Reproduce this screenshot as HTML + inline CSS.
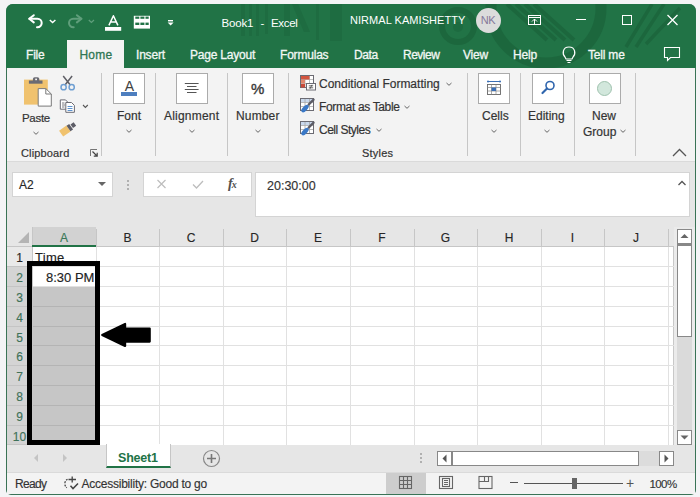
<!DOCTYPE html>
<html><head><meta charset="utf-8">
<style>
*{box-sizing:border-box}
body{margin:0;width:700px;height:497px;background:#f4f4f6;position:relative;overflow:hidden;font-family:"Liberation Sans",sans-serif;color:#262626}
.a{position:absolute}
.t{position:absolute;white-space:nowrap;line-height:1}
.tab{color:#f2f7f4;font-size:12px;top:48.5px;-webkit-text-stroke:0.3px #f2f7f4;letter-spacing:-0.2px}
.rl{font-size:12px;color:#333;-webkit-text-stroke:0.2px #333}
.box{position:absolute;background:#fff;border:1px solid #ababab}
.sep{position:absolute;width:1px;background:#c6c6c6;top:73px;height:83px}
.chev{position:absolute;width:5px;height:5px;border-right:1px solid #444;border-bottom:1px solid #444;transform:rotate(45deg)}
.ch{position:absolute;font-size:12px;color:#262626;top:230.5px;text-align:center;width:64px;-webkit-text-stroke:0.15px currentColor}
.rn{position:absolute;font-size:12px;color:#262626;left:7px;width:25px;text-align:center;-webkit-text-stroke:0.15px currentColor}
</style></head>
<body>
<!-- window -->
<div class="a" style="left:6px;top:4px;width:690px;height:491px;border-radius:7px 7px 5px 5px;background:#3a7356"></div>
<div class="a" style="left:6px;top:4px;width:690px;height:64px;border-radius:7px 7px 0 0;background:#217346"></div>
<!-- title bar pattern -->
<svg class="a" style="left:6px;top:4px" width="690" height="64" viewBox="6 4 690 64">
  <g fill="none" stroke="#1b633b" stroke-opacity="0.75">
    <circle cx="458" cy="26" r="16" stroke-width="6"/>
    <circle cx="546" cy="8" r="55" stroke-width="11"/>
    <path d="M507 4 L547 40 M516 4 L556 40 M525 4 L565 40 M534 4 L574 40" stroke-width="4"/>
    <path d="M626 47 L652 4 M636 47 L664 4 M646 44 L680 8" stroke-width="3.5"/>
  </g>
  <circle cx="458" cy="27" r="5" fill="#1c673d" fill-opacity="0.65"/>
  <g fill="#1c673d" fill-opacity="0.6">
    <rect x="241" y="4" width="4" height="32"/>
    <rect x="249" y="4" width="3" height="32"/>
    <rect x="256" y="4" width="3" height="32"/>
    <rect x="265" y="4" width="3" height="30"/>
    <rect x="284" y="4" width="6" height="32"/>
    <path d="M292 4 h6 l12 28 h-6 z"/>
    <rect x="316" y="4" width="3" height="36"/>
    <rect x="330" y="4" width="12" height="37"/>
  </g>
</svg>

<!-- quick access toolbar -->
<svg class="a" style="left:26px;top:12px" width="160" height="22" viewBox="0 0 160 22">
  <g fill="none" stroke="#fff" stroke-width="2" stroke-linecap="round" stroke-linejoin="round">
    <path d="M3.5 6.8 H11.5 A4.2 4.2 0 0 1 11.5 15.2 H11"/>
    <path d="M7.8 3.2 L3.2 6.8 L7.8 10.4"/>
  </g>
  <path d="M23.8 8 L26.6 10.6 L29.4 8" fill="none" stroke="#fff" stroke-width="1.4"/>
  <g fill="none" stroke="#5f9e7b" stroke-width="2" stroke-linecap="round" stroke-linejoin="round">
    <path d="M55.2 6.8 H47.2 A4.2 4.2 0 0 0 47.2 15.2 H47.7"/>
    <path d="M50.9 3.2 L55.5 6.8 L50.9 10.4"/>
  </g>
  <path d="M62.8 8 L65.4 10.4 L68 8" fill="none" stroke="#5f9e7b" stroke-width="1.3"/>
  <path d="M82.9 13.4 L87.4 3.8 L91.9 13.4 M84.5 10 H90.3" fill="none" stroke="#fff" stroke-width="1.5" stroke-linejoin="round"/>
  <rect x="79" y="15" width="16.2" height="3.8" fill="#fff"/>
  <rect x="107.8" y="3.8" width="16.2" height="12.8" fill="#fff"/>
  <g fill="#217346">
    <rect x="109.3" y="4.6" width="4" height="2.2"/><rect x="114.4" y="4.6" width="4" height="2.2"/><rect x="119.5" y="4.6" width="3.2" height="2.2"/>
    <rect x="109.3" y="10.6" width="4" height="2.4"/><rect x="114.4" y="10.6" width="4" height="2.4"/><rect x="119.5" y="10.6" width="3.2" height="2.4"/>
  </g>
  <g fill="#fff">
    <rect x="142" y="8" width="5" height="1.4"/>
    <path d="M141.6 10.4 h6 l-3 3.2 z"/>
  </g>
</svg>

<div class="t" style="left:221.5px;top:18px;font-size:11.5px;color:#fff;letter-spacing:-0.15px">Book1</div>
<div class="t" style="left:260.5px;top:18px;font-size:11.5px;color:#fff">-</div>
<div class="t" style="left:271px;top:18px;font-size:11.5px;color:#fff;letter-spacing:-0.3px">Excel</div>
<div class="t" style="left:350px;top:14.5px;font-size:11px;color:#fff;letter-spacing:0.05px">NIRMAL KAMISHETTY</div>
<div class="a" style="left:476px;top:8px;width:25px;height:25px;border-radius:50%;background:#dcdcdc"></div>
<div class="t" style="left:479.5px;top:15px;font-size:11px;color:#85789a;width:17px;text-align:center;letter-spacing:-0.3px">NK</div>

<!-- window controls -->
<svg class="a" style="left:520px;top:8px" width="170" height="24" viewBox="0 0 170 24">
  <g fill="none" stroke="#fff" stroke-width="1">
    <rect x="8.5" y="7.5" width="12" height="9"/>
    <line x1="8.5" y1="9.5" x2="20.5" y2="9.5"/>
    <path d="M12 13.5 l2.5 -2.5 l2.5 2.5 M14.5 11 v5"/>
    <line x1="56" y1="11.5" x2="66" y2="11.5"/>
    <rect x="102.5" y="7.5" width="9" height="9"/>
    <path d="M147.5 7 l10 10 M157.5 7 l-10 10" stroke-width="1.3"/>
  </g>
</svg>

<!-- tabs -->
<div class="a" style="left:67px;top:40px;width:57px;height:28px;background:#f3f3f3"></div>
<div class="t tab" style="left:26px">File</div>
<div class="t tab" style="left:79.5px;color:#2f7754;letter-spacing:0.2px;-webkit-text-stroke:0.3px #2f7754">Home</div>
<div class="t tab" style="left:136px">Insert</div>
<div class="t tab" style="left:190px">Page Layout</div>
<div class="t tab" style="left:280px">Formulas</div>
<div class="t tab" style="left:354px;letter-spacing:-0.4px">Data</div>
<div class="t tab" style="left:403px;letter-spacing:-0.5px">Review</div>
<div class="t tab" style="left:463px">View</div>
<div class="t tab" style="left:513px">Help</div>
<svg class="a" style="left:560px;top:44px" width="18" height="20" viewBox="0 0 18 20">
  <path d="M5 13 C2 10 2.5 3 9 3 C15.5 3 16 10 13 13 L12 15 H6 Z" fill="none" stroke="#fff" stroke-width="1.2"/>
  <path d="M6.5 16.5 h5 M7.5 18.5 h3" stroke="#fff" stroke-width="1"/>
</svg>
<div class="t tab" style="left:588px">Tell me</div>
<svg class="a" style="left:662px;top:44px" width="20" height="20" viewBox="0 0 20 20">
  <path d="M2.5 3.5 h15 v10 h-9 l-3 3 v-3 h-3 z" fill="none" stroke="#fff" stroke-width="1.1"/>
</svg>

<!-- ribbon -->
<div class="a" style="left:7px;top:68px;width:688px;height:94px;background:#f3f3f3;border-bottom:1px solid #dadada"></div>

<!-- clipboard group -->
<svg class="a" style="left:20px;top:74px" width="80" height="64" viewBox="0 0 80 64">
  <rect x="4" y="5.6" width="23.8" height="25" fill="#f0c26e"/>
  <path d="M8.9 6.5 H22.5 V9.7 H8.9 Z" fill="#6b6b73"/>
  <path d="M12.9 6.9 V5 A1.8 1.8 0 0 1 14.7 3.2 H17.5 A1.8 1.8 0 0 1 19.3 5 V6.9 Z" fill="#6b6b73"/>
  <rect x="15.2" y="4.6" width="1.8" height="1.6" fill="#f3f3f3"/>
  <path d="M18.2 14.6 H25.8 L31.3 20 V32.1 H18.2 Z" fill="#fff" stroke="#7a7a7a" stroke-width="1"/>
  <path d="M25.8 14.6 V20 H31.3" fill="none" stroke="#7a7a7a" stroke-width="1"/>
  <!-- scissors -->
  <path d="M43.2 2 L50.3 11 M52.1 2 L45 11" stroke="#5f5f66" stroke-width="1.5"/>
  <circle cx="43.6" cy="13.2" r="2.6" fill="none" stroke="#6f9fd2" stroke-width="1.5"/>
  <circle cx="51.7" cy="13.2" r="2.6" fill="none" stroke="#6f9fd2" stroke-width="1.5"/>
  <!-- copy -->
  <path d="M40.3 25.9 H45.5 L47.8 28.2 V35.2 H40.3 Z" fill="#fff" stroke="#6b6b73" stroke-width="1"/>
  <path d="M42 29 H44.5 M42 31 H45 M42 33 H44.5" stroke="#6b6b73" stroke-width="0.9"/>
  <path d="M45.8 28.5 H51.5 L54.4 31.4 V38.3 H45.8 Z" fill="#fff" stroke="#6b6b73" stroke-width="1"/>
  <path d="M47.6 32.5 H52.5 M47.6 34.5 H52.5 M47.6 36.5 H52.5" stroke="#4a86c8" stroke-width="0.9"/>
  <path d="M63 31 L65.4 33.4 L67.8 31" fill="none" stroke="#555" stroke-width="1.1"/>
  <!-- format painter -->
  <g transform="translate(48.5,54.5) rotate(-35)">
    <path d="M-9 -3.6 H0 V3.6 H-9 Z" fill="#f0c26e"/>
    <rect x="0" y="-3.4" width="3.2" height="6.8" fill="#5c5c66"/>
    <rect x="4" y="-2.2" width="3.8" height="4.4" fill="#5c5c66"/>
  </g>
</svg>
<svg class="a" style="left:32px;top:130px" width="8" height="6" viewBox="0 0 8 6"><path d="M1.5 2 L4 4.3 L6.5 2" fill="none" stroke="#666" stroke-width="1"/></svg>
<div class="t rl" style="left:22px;top:112.5px;font-size:11.5px;letter-spacing:-0.3px">Paste</div>
<div class="t rl" style="left:21px;top:147.5px;font-size:11px;letter-spacing:0.15px">Clipboard</div>
<svg class="a" style="left:89px;top:148px" width="10" height="10" viewBox="0 0 10 10">
  <path d="M1.5 8 V1.5 H8" fill="none" stroke="#666" stroke-width="0.9"/>
  <path d="M3.5 3.5 L8 8 M8.2 4.8 V8.2 H4.8" fill="none" stroke="#444" stroke-width="1.2"/>
</svg>
<div class="sep" style="left:101px"></div>

<!-- Font group -->
<div class="box" style="left:113px;top:73px;width:32px;height:31px"></div>
<div class="t" style="left:121px;top:79px;font-size:14px;color:#404040;width:17px;text-align:center">A</div>
<div class="a" style="left:121px;top:92px;width:16px;height:4px;background:#4e7fbf"></div>
<div class="t rl" style="left:117px;top:110px">Font</div>
<svg class="a" style="left:125px;top:128px" width="8" height="6" viewBox="0 0 8 6"><path d="M1.5 2 L4 4.3 L6.5 2" fill="none" stroke="#666" stroke-width="1"/></svg>
<div class="sep" style="left:155px"></div>

<!-- Alignment -->
<div class="box" style="left:176px;top:73px;width:32px;height:31px"></div>
<svg class="a" style="left:176px;top:73px" width="32" height="31" viewBox="0 0 32 31">
  <path d="M8.8 10.5 h13.8 M11 13.5 h9.5 M8.8 16.5 h13.8 M11 19.5 h9.5" stroke="#555" stroke-width="1"/>
</svg>
<div class="t rl" style="left:164px;top:110px;letter-spacing:0.2px">Alignment</div>
<svg class="a" style="left:188px;top:128px" width="8" height="6" viewBox="0 0 8 6"><path d="M1.5 2 L4 4.3 L6.5 2" fill="none" stroke="#666" stroke-width="1"/></svg>
<div class="sep" style="left:227px"></div>

<!-- Number -->
<div class="box" style="left:242px;top:73px;width:32px;height:31px"></div>
<div class="t" style="left:251px;top:81px;font-size:15px;color:#3a3a3a;-webkit-text-stroke:0.4px #3a3a3a">%</div>
<div class="t rl" style="left:236px;top:110px;letter-spacing:0.15px">Number</div>
<svg class="a" style="left:254px;top:128px" width="8" height="6" viewBox="0 0 8 6"><path d="M1.5 2 L4 4.3 L6.5 2" fill="none" stroke="#666" stroke-width="1"/></svg>
<div class="sep" style="left:288px"></div>

<!-- Styles -->
<svg class="a" style="left:296px;top:72px" width="30" height="70" viewBox="296 72 30 70">
  <rect x="300.5" y="75.5" width="13" height="12" fill="#fff" stroke="#6b6b73"/>
  <path d="M305 76 V87 M309.5 76 V87 M301 79.5 H313 M301 83.5 H313" stroke="#b0b0b0" stroke-width="0.8"/>
  <rect x="301" y="76" width="8.5" height="3.5" fill="#d2553f"/>
  <rect x="301" y="80" width="4" height="3.5" fill="#e0866d"/>
  <rect x="301" y="84" width="4" height="3.5" fill="#c84a3a"/>
  <rect x="306.5" y="83.5" width="9" height="6.5" fill="#fff" stroke="#6b6b73"/>
  <path d="M308.8 85.8 H313.2 M308.8 87.8 H313.2 M312 84.8 L310 88.8" stroke="#444" stroke-width="0.8"/>
  <g transform="translate(0,0)">
  <rect x="300.5" y="98.5" width="13" height="12" fill="#fff" stroke="#6b6b73"/>
  <rect x="301" y="99" width="12" height="3.2" fill="#c9d8ec"/>
  <path d="M305 99 V110 M309.5 99 V110 M301 102.5 H313 M301 106.5 H313" stroke="#a8a8a8" stroke-width="0.8"/>
  <path d="M313.6 99.6 L308.6 104.6" stroke="#5c5c66" stroke-width="2.2" stroke-linecap="round"/>
  <ellipse cx="305" cy="108.6" rx="4.6" ry="2.3" transform="rotate(-45 305 108.6)" fill="#3a78c6"/>
  </g>
  <g transform="translate(0,23)">
  <rect x="300.5" y="98.5" width="13" height="12" fill="#fff" stroke="#6b6b73"/>
  <rect x="301" y="99" width="12" height="3.2" fill="#c9d8ec"/>
  <path d="M305 99 V110 M309.5 99 V110 M301 102.5 H313 M301 106.5 H313" stroke="#a8a8a8" stroke-width="0.8"/>
  <path d="M313.6 99.6 L308.6 104.6" stroke="#5c5c66" stroke-width="2.2" stroke-linecap="round"/>
  <ellipse cx="305" cy="108.6" rx="4.6" ry="2.3" transform="rotate(-45 305 108.6)" fill="#3a78c6"/>
  </g>
</svg>
<div class="t rl" style="left:319px;top:78px">Conditional Formatting</div>
<svg class="a" style="left:445px;top:81px" width="8" height="6" viewBox="0 0 8 6"><path d="M1.5 2 L4 4.3 L6.5 2" fill="none" stroke="#666" stroke-width="1"/></svg>
<div class="t rl" style="left:319px;top:101px;letter-spacing:-0.35px">Format as Table</div>
<svg class="a" style="left:403px;top:104px" width="8" height="6" viewBox="0 0 8 6"><path d="M1.5 2 L4 4.3 L6.5 2" fill="none" stroke="#666" stroke-width="1"/></svg>
<div class="t rl" style="left:319px;top:124px;letter-spacing:-0.5px">Cell Styles</div>
<svg class="a" style="left:375px;top:127px" width="8" height="6" viewBox="0 0 8 6"><path d="M1.5 2 L4 4.3 L6.5 2" fill="none" stroke="#666" stroke-width="1"/></svg>
<div class="t rl" style="left:362px;top:147.5px;font-size:11px;letter-spacing:0.2px">Styles</div>
<div class="sep" style="left:467px"></div>

<!-- Cells -->
<div class="box" style="left:478px;top:73px;width:32px;height:31px"></div>
<svg class="a" style="left:478px;top:73px" width="32" height="31" viewBox="0 0 32 31">
  <rect x="9.5" y="11.5" width="13" height="10" fill="#fff" stroke="#666" stroke-width="0.9"/>
  <path d="M9.5 14.5 h13 M9.5 18 h13 M13.5 11.5 v10 M18 11.5 v10" stroke="#888" stroke-width="0.7"/>
  <rect x="13.5" y="14.5" width="4.5" height="3.5" fill="#3b6fb6"/>
  <path d="M9.5 8.5 h13" stroke="#3b6fb6" stroke-width="1"/>
  <circle cx="10" cy="8.5" r="1" fill="#3b6fb6"/><circle cx="22" cy="8.5" r="1" fill="#3b6fb6"/>
</svg>
<div class="t rl" style="left:482px;top:110px">Cells</div>
<svg class="a" style="left:490px;top:128px" width="8" height="6" viewBox="0 0 8 6"><path d="M1.5 2 L4 4.3 L6.5 2" fill="none" stroke="#666" stroke-width="1"/></svg>
<div class="sep" style="left:520px"></div>

<!-- Editing -->
<div class="box" style="left:532px;top:73px;width:32px;height:31px"></div>
<svg class="a" style="left:532px;top:73px" width="32" height="31" viewBox="0 0 32 31">
  <circle cx="18" cy="12.5" r="4" fill="none" stroke="#2f65ad" stroke-width="1.6"/>
  <path d="M15 15.5 L10.5 20" stroke="#2f65ad" stroke-width="2.2" stroke-linecap="round"/>
</svg>
<div class="t rl" style="left:528px;top:110px">Editing</div>
<svg class="a" style="left:543px;top:128px" width="8" height="6" viewBox="0 0 8 6"><path d="M1.5 2 L4 4.3 L6.5 2" fill="none" stroke="#666" stroke-width="1"/></svg>
<div class="sep" style="left:574px"></div>

<!-- New Group -->
<div class="box" style="left:589px;top:73px;width:32px;height:31px"></div>
<div class="a" style="left:597px;top:81px;width:15px;height:15px;border-radius:50%;background:#d2e7dc;border:1px solid #9fc2ae"></div>
<div class="t rl" style="left:592px;top:110px">New</div>
<div class="t rl" style="left:583px;top:126px">Group</div>
<svg class="a" style="left:619px;top:128px" width="8" height="6" viewBox="0 0 8 6"><path d="M1.5 2 L4 4.3 L6.5 2" fill="none" stroke="#666" stroke-width="1"/></svg>
<div class="sep" style="left:635px"></div>

<svg class="a" style="left:670px;top:145px" width="20" height="14" viewBox="0 0 20 14">
  <path d="M3 11 L9.5 4.5 L16 11" fill="none" stroke="#555" stroke-width="1.3"/>
</svg>

<!-- formula band -->
<div class="a" style="left:7px;top:162px;width:688px;height:65px;background:#e6e6e6"></div>
<div class="a" style="left:12px;top:172px;width:101px;height:25px;background:#fff;border:1px solid #d4d4d4"></div>
<div class="t" style="left:19px;top:179px;font-size:12px;color:#262626;-webkit-text-stroke:0.15px currentColor">A2</div>
<svg class="a" style="left:97px;top:180px" width="10" height="8" viewBox="0 0 10 8"><path d="M1 2 h8 l-4 4 z" fill="#666"/></svg>
<div class="a" style="left:127px;top:180px;width:2px;height:2px;background:#b0b0b0"></div>
<div class="a" style="left:127px;top:184px;width:2px;height:2px;background:#b0b0b0"></div>
<div class="a" style="left:127px;top:188px;width:2px;height:2px;background:#b0b0b0"></div>
<div class="a" style="left:143px;top:172px;width:109px;height:25px;background:#fff;border:1px solid #d4d4d4"></div>
<svg class="a" style="left:143px;top:172px" width="109" height="25" viewBox="0 0 109 25">
  <path d="M14.5 8 l8 8 M22.5 8 l-8 8" stroke="#bdbdbd" stroke-width="1.2"/>
  <path d="M50 12.5 l3.5 3.5 l6.5 -7" fill="none" stroke="#bdbdbd" stroke-width="1.3"/>
</svg>
<div class="t" style="left:228px;top:177px;font-size:14px;font-family:'Liberation Serif',serif;font-style:italic;font-weight:bold;color:#505050">f<span style="font-size:10px;margin-left:-1px">x</span></div>
<div class="a" style="left:255px;top:172px;width:435px;height:45px;background:#fff;border:1px solid #d4d4d4"></div>
<div class="t" style="left:267px;top:179.5px;font-size:12.5px;color:#333;-webkit-text-stroke:0.15px currentColor">20:30:00</div>
<svg class="a" style="left:677px;top:179px" width="10" height="8" viewBox="0 0 10 8"><path d="M1.5 6 L5 2.5 L8.5 6" fill="none" stroke="#555" stroke-width="1.3"/></svg>

<!-- column headers -->
<div class="a" style="left:7px;top:227px;width:667px;height:20px;background:#e6e6e6"></div>
<svg class="a" style="left:16px;top:231px" width="14" height="13" viewBox="0 0 14 13"><path d="M13 1 V12 H2 Z" fill="#b4b4b4"/></svg>
<div class="a" style="left:32px;top:227px;width:64px;height:20px;background:#d2d2d2"></div>
<div class="ch" style="left:32px;width:64px;color:#3a7858">A</div>
<div class="ch" style="left:96px;width:63px;color:#262626">B</div>
<div class="ch" style="left:159px;width:64px;color:#262626">C</div>
<div class="ch" style="left:223px;width:63px;color:#262626">D</div>
<div class="ch" style="left:286px;width:64px;color:#262626">E</div>
<div class="ch" style="left:350px;width:64px;color:#262626">F</div>
<div class="ch" style="left:414px;width:63px;color:#262626">G</div>
<div class="ch" style="left:477px;width:64px;color:#262626">H</div>
<div class="ch" style="left:541px;width:63px;color:#262626">I</div>
<div class="ch" style="left:604px;width:64px;color:#262626">J</div>
<div class="a" style="left:96px;top:229px;width:1px;height:17px;background:#c6c6c6"></div>
<div class="a" style="left:159px;top:229px;width:1px;height:17px;background:#c6c6c6"></div>
<div class="a" style="left:223px;top:229px;width:1px;height:17px;background:#c6c6c6"></div>
<div class="a" style="left:286px;top:229px;width:1px;height:17px;background:#c6c6c6"></div>
<div class="a" style="left:350px;top:229px;width:1px;height:17px;background:#c6c6c6"></div>
<div class="a" style="left:414px;top:229px;width:1px;height:17px;background:#c6c6c6"></div>
<div class="a" style="left:477px;top:229px;width:1px;height:17px;background:#c6c6c6"></div>
<div class="a" style="left:541px;top:229px;width:1px;height:17px;background:#c6c6c6"></div>
<div class="a" style="left:604px;top:229px;width:1px;height:17px;background:#c6c6c6"></div>
<div class="a" style="left:668px;top:229px;width:1px;height:17px;background:#c6c6c6"></div>
<!-- grid -->
<div class="a" style="left:7px;top:246px;width:25px;height:199px;background:#e9e9e9"></div>
<div class="a" style="left:7px;top:266px;width:25px;height:179px;background:#d4d4d4"></div>
<div class="a" style="left:32px;top:246px;width:642px;height:199px;background:#fff;border-right:1px solid #c8c8c8"></div>
<div class="a" style="left:7px;top:266px;width:25px;height:1px;background:#c4c4c4"></div>
<div class="a" style="left:7px;top:286px;width:25px;height:1px;background:#c4c4c4"></div>
<div class="a" style="left:7px;top:306px;width:25px;height:1px;background:#c4c4c4"></div>
<div class="a" style="left:7px;top:326px;width:25px;height:1px;background:#c4c4c4"></div>
<div class="a" style="left:7px;top:345px;width:25px;height:1px;background:#c4c4c4"></div>
<div class="a" style="left:7px;top:365px;width:25px;height:1px;background:#c4c4c4"></div>
<div class="a" style="left:7px;top:385px;width:25px;height:1px;background:#c4c4c4"></div>
<div class="a" style="left:7px;top:405px;width:25px;height:1px;background:#c4c4c4"></div>
<div class="a" style="left:7px;top:425px;width:25px;height:1px;background:#c4c4c4"></div>
<div class="a" style="left:7px;top:444px;width:25px;height:1px;background:#c4c4c4"></div>
<div class="a" style="left:32px;top:266px;width:642px;height:1px;background:#e1e1e1"></div>
<div class="a" style="left:32px;top:286px;width:642px;height:1px;background:#e1e1e1"></div>
<div class="a" style="left:32px;top:306px;width:642px;height:1px;background:#e1e1e1"></div>
<div class="a" style="left:32px;top:326px;width:642px;height:1px;background:#e1e1e1"></div>
<div class="a" style="left:32px;top:345px;width:642px;height:1px;background:#e1e1e1"></div>
<div class="a" style="left:32px;top:365px;width:642px;height:1px;background:#e1e1e1"></div>
<div class="a" style="left:32px;top:385px;width:642px;height:1px;background:#e1e1e1"></div>
<div class="a" style="left:32px;top:405px;width:642px;height:1px;background:#e1e1e1"></div>
<div class="a" style="left:32px;top:425px;width:642px;height:1px;background:#e1e1e1"></div>
<div class="a" style="left:96px;top:247px;width:1px;height:198px;background:#e1e1e1"></div>
<div class="a" style="left:159px;top:247px;width:1px;height:198px;background:#e1e1e1"></div>
<div class="a" style="left:223px;top:247px;width:1px;height:198px;background:#e1e1e1"></div>
<div class="a" style="left:286px;top:247px;width:1px;height:198px;background:#e1e1e1"></div>
<div class="a" style="left:350px;top:247px;width:1px;height:198px;background:#e1e1e1"></div>
<div class="a" style="left:414px;top:247px;width:1px;height:198px;background:#e1e1e1"></div>
<div class="a" style="left:477px;top:247px;width:1px;height:198px;background:#e1e1e1"></div>
<div class="a" style="left:541px;top:247px;width:1px;height:198px;background:#e1e1e1"></div>
<div class="a" style="left:604px;top:247px;width:1px;height:198px;background:#e1e1e1"></div>
<div class="a" style="left:668px;top:247px;width:1px;height:198px;background:#e1e1e1"></div>
<div class="a" style="left:7px;top:246px;width:667px;height:1px;background:#c6c6c6"></div>
<div class="a" style="left:32px;top:227px;width:1px;height:218px;background:#c6c6c6"></div>
<div class="a" style="left:33px;top:287px;width:63px;height:158px;background:#c6c6c6"></div>
<div class="a" style="left:33px;top:306px;width:63px;height:1px;background:#b4b4b4"></div>
<div class="a" style="left:33px;top:326px;width:63px;height:1px;background:#b4b4b4"></div>
<div class="a" style="left:33px;top:345px;width:63px;height:1px;background:#b4b4b4"></div>
<div class="a" style="left:33px;top:365px;width:63px;height:1px;background:#b4b4b4"></div>
<div class="a" style="left:33px;top:385px;width:63px;height:1px;background:#b4b4b4"></div>
<div class="a" style="left:33px;top:405px;width:63px;height:1px;background:#b4b4b4"></div>
<div class="a" style="left:33px;top:425px;width:63px;height:1px;background:#b4b4b4"></div>
<div class="a" style="left:32px;top:245px;width:64px;height:2px;background:#217346"></div>
<div class="rn t" style="top:252px;color:#262626">1</div>
<div class="rn t" style="top:272px;color:#3f7259">2</div>
<div class="rn t" style="top:292px;color:#3f7259">3</div>
<div class="rn t" style="top:312px;color:#3f7259">4</div>
<div class="rn t" style="top:332px;color:#3f7259">5</div>
<div class="rn t" style="top:351px;color:#3f7259">6</div>
<div class="rn t" style="top:371px;color:#3f7259">7</div>
<div class="rn t" style="top:391px;color:#3f7259">8</div>
<div class="rn t" style="top:411px;color:#3f7259">9</div>
<div class="rn t" style="top:431px;color:#3f7259">10</div>

<!-- scrollbar zone -->
<div class="a" style="left:674px;top:227px;width:21px;height:218px;background:#ebebeb"></div>
<div class="a" style="left:677px;top:244px;width:15px;height:186px;background:#dadada"></div>
<div class="a" style="left:677px;top:229px;width:15px;height:15px;background:#fff;border:1px solid #888"></div>
<svg class="a" style="left:677px;top:229px" width="15" height="15" viewBox="0 0 15 15"><path d="M3.5 9 h8 l-4 -4 z" fill="#666"/></svg>
<div class="a" style="left:677px;top:244px;width:15px;height:93px;background:#fff;border:1px solid #888;border-top-width:2px"></div>
<div class="a" style="left:677px;top:430px;width:15px;height:15px;background:#fff;border:1px solid #888"></div>
<svg class="a" style="left:677px;top:430px" width="15" height="15" viewBox="0 0 15 15"><path d="M3.5 5.5 h8 l-4 4 z" fill="#666"/></svg>

<!-- sheet tabs bar -->
<div class="a" style="left:7px;top:445px;width:688px;height:27px;background:#e6e6e6"></div>
<svg class="a" style="left:30px;top:452px" width="40" height="12" viewBox="0 0 40 12"><path d="M8 2 L4 6 L8 10 Z M33 2 L37 6 L33 10 Z" fill="#c4c4c4"/></svg>
<div class="a" style="left:106px;top:444px;width:65px;height:24px;background:#fff;border:1px solid #c6c6c6;border-top:none;border-bottom:2px solid #217346"></div>
<div class="t" style="left:118px;top:452px;font-size:12.5px;font-weight:bold;color:#217346;letter-spacing:-0.2px">Sheet1</div>
<svg class="a" style="left:202px;top:449px" width="19" height="19" viewBox="0 0 19 19">
  <circle cx="9.5" cy="9.5" r="8" fill="none" stroke="#888" stroke-width="1.2"/>
  <path d="M9.5 5 v9 M5 9.5 h9" stroke="#777" stroke-width="1.6"/>
</svg>
<div class="a" style="left:420px;top:453px;width:2px;height:2px;background:#b0b0b0"></div>
<div class="a" style="left:420px;top:457px;width:2px;height:2px;background:#b0b0b0"></div>
<div class="a" style="left:420px;top:461px;width:2px;height:2px;background:#b0b0b0"></div>
<div class="a" style="left:437px;top:451px;width:237px;height:15px;background:#dcdcdc"></div>
<div class="a" style="left:437px;top:451px;width:15px;height:15px;background:#fff;border:1px solid #888"></div>
<svg class="a" style="left:437px;top:451px" width="15" height="15" viewBox="0 0 15 15"><path d="M9.5 3.5 v8 l-4 -4 z" fill="#555"/></svg>
<div class="a" style="left:451px;top:451px;width:188px;height:15px;background:#fff;border:1px solid #888;border-left-width:2px"></div>
<div class="a" style="left:659px;top:451px;width:15px;height:15px;background:#fff;border:1px solid #888"></div>
<svg class="a" style="left:659px;top:451px" width="15" height="15" viewBox="0 0 15 15"><path d="M5.5 3.5 v8 l4 -4 z" fill="#555"/></svg>

<!-- status bar -->
<div class="a" style="left:7px;top:472px;width:688px;height:22px;background:#f3f3f3;border-top:1px solid #dadada"></div>
<div class="t" style="left:15px;top:478px;font-size:12px;color:#333;letter-spacing:-0.7px;-webkit-text-stroke:0.15px currentColor">Ready</div>
<svg class="a" style="left:62px;top:475px" width="18" height="16" viewBox="0 0 18 16">
  <path d="M5.5 4.2 A5.2 5.2 0 0 0 4.8 12.8" fill="none" stroke="#444" stroke-width="1.3" stroke-dasharray="1.8 1.2"/>
  <path d="M6.5 4.5 H14 M10.2 1.5 V7.5" stroke="#444" stroke-width="1.3"/>
  <path d="M8.5 10.8 L11 13.6 L16 8.4" fill="none" stroke="#444" stroke-width="1.5"/>
</svg>
<div class="t" style="left:81.5px;top:478px;font-size:12px;color:#333;letter-spacing:-0.24px;-webkit-text-stroke:0.15px currentColor">Accessibility: Good to go</div>
<div class="a" style="left:386px;top:473px;width:40px;height:21px;background:#cdcdcd"></div>
<svg class="a" style="left:396px;top:474px" width="100" height="18" viewBox="0 0 100 18">
  <g fill="none" stroke="#666" stroke-width="1.1">
    <rect x="3.5" y="2.5" width="12" height="12"/>
    <path d="M7.5 2.5 v12 M11.5 2.5 v12 M3.5 6.5 h12 M3.5 10.5 h12"/>
    <rect x="43.5" y="2.5" width="13" height="12"/>
    <rect x="46.5" y="4.5" width="7" height="8"/>
    <path d="M48 6.5 h4 M48 8.5 h4 M48 10.5 h4"/>
    <rect x="83" y="2.5" width="13" height="12"/>
    <path d="M88.5 2.5 v5 h4 v-5 M83 7.5 h5.5"/>
  </g>
</svg>
<div class="a" style="left:510px;top:482px;width:8px;height:1px;background:#555"></div>
<div class="a" style="left:524px;top:483px;width:99px;height:1px;background:#555"></div>
<div class="a" style="left:572px;top:478px;width:5px;height:11px;background:#666"></div>
<div class="t" style="left:626px;top:476px;font-size:14px;color:#555">+</div>
<div class="t" style="left:649.5px;top:478.5px;font-size:11.5px;color:#333;letter-spacing:-0.6px;-webkit-text-stroke:0.15px currentColor">100%</div>

<!-- grid text -->
<div class="t" style="left:35px;top:251px;font-size:13px;color:#222;letter-spacing:0.3px;-webkit-text-stroke:0.15px #222">Time</div>
<div class="t" style="left:46px;top:271px;font-size:13px;color:#222;-webkit-text-stroke:0.15px #222">8:30 PM</div>

<!-- black marker box and arrow -->
<div class="a" style="left:27px;top:261px;width:73px;height:184px;border:5px solid #000"></div>
<svg class="a" style="left:100px;top:322px" width="54" height="27" viewBox="0 0 54 27">
  <path d="M2.2 13 L25.1 2 V6.6 H49.7 V19.6 H25.1 V24 Z" fill="#000" stroke="#000" stroke-width="2.2" stroke-linejoin="round"/>
</svg>
</body></html>
